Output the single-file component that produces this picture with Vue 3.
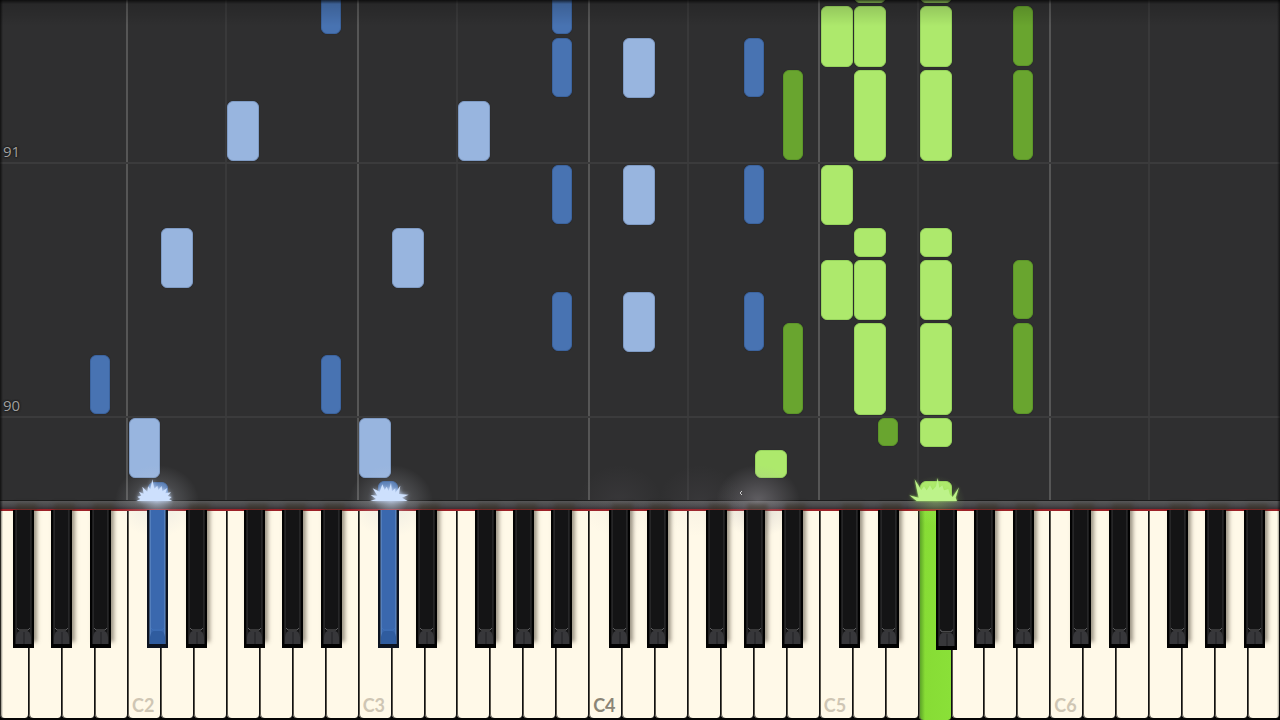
<script setup>
const VIEW = 1280
const ROLL = 500
const OCTAVE = 230.75
const WHITE = OCTAVE / 7
const C2 = 127.5

const whiteNames = ['C', 'D', 'E', 'F', 'G', 'A', 'B']
const offsets = { C: 0, D: 1, E: 2, F: 3, G: 4, A: 5, B: 6 }
const sharpOffsets = { 'C#': 20, 'D#': 58.5, 'F#': 117, 'G#': 155, 'A#': 193.5 }

const pct = (value, total) => `${(value / total) * 100}%`

function locate(pitch) {
  const name = pitch.slice(0, -1)
  const start = C2 + (Number(pitch.slice(-1)) - 2) * OCTAVE
  return name in sharpOffsets
    ? { left: start + sharpOffsets[name], width: 20, sharp: true }
    : { left: start + offsets[name] * WHITE + 1, width: WHITE - 1, sharp: false }
}

const score = [
  ['left', 'A#1', [[355, 414]]],
  ['left', 'C2', [[418, 478]]],
  ['left', 'C#2', [[482, 510]]],
  ['left', 'D2', [[228, 288]]],
  ['left', 'F2', [[101, 161]]],
  ['left', 'A#2', [[-20, 34], [355, 414]]],
  ['left', 'C3', [[418, 478]]],
  ['left', 'C#3', [[481, 510]]],
  ['left', 'D3', [[228, 288]]],
  ['left', 'F3', [[101, 161]]],
  ['left', 'A#3', [[-20, 34], [38, 97], [165, 224], [292, 351]]],
  ['left', 'D4', [[38, 98], [165, 225], [292, 352]]],
  ['left', 'G#4', [[38, 97], [165, 224], [292, 351]]],
  ['right', 'A4', [[450, 478]]],
  ['right', 'A#4', [[70, 160], [323, 414]]],
  ['right', 'C5', [[6, 67], [165, 225], [260, 320]]],
  ['right', 'D5', [[-20, 3], [6, 67], [70, 161], [228, 257], [260, 320], [323, 415]]],
  ['right', 'D#5', [[418, 446]]],
  ['right', 'F5', [[-20, 3], [6, 67], [70, 161], [228, 257], [260, 320], [323, 415], [418, 447], [481, 510]]],
  ['right', 'A#5', [[6, 66], [70, 160], [260, 319], [323, 414]]],
]

const notes = score.flatMap(([hand, pitch, spans]) => {
  const place = locate(pitch)
  return spans.map(([from, to]) => ({
    id: `${pitch}-${from}`,
    kind: [hand, { sharp: place.sharp }],
    style: {
      left: pct(place.left, VIEW),
      width: pct(place.width, VIEW),
      top: pct(from, ROLL),
      height: pct(to - from, ROLL),
    },
  }))
})

const measures = [
  { number: 91, style: { top: pct(162, ROLL) } },
  { number: 90, style: { top: pct(416, ROLL) } },
]

const guides = [2, 3, 4, 5, 6].flatMap((octave) => {
  const x = C2 + (octave - 2) * OCTAVE
  return [
    { id: `c${octave}`, strong: true, style: { left: pct(x - 1.3, VIEW) } },
    { id: `f${octave}`, strong: false, style: { left: pct(x + 3 * WHITE - 1.3, VIEW) } },
  ]
})

const whiteKeys = Array.from({ length: 39 }, (_, i) => {
  const step = i + 3
  const name = whiteNames[step % 7]
  const pitch = name + (1 + Math.floor(step / 7))
  const left = C2 + (i - 4) * WHITE
  const visible = Math.min(VIEW, left + WHITE) - Math.max(0, left)
  return {
    pitch,
    label: name === 'C' ? pitch : '',
    middle: pitch === 'C4',
    pressed: pitch === 'F5',
    style: { flexGrow: visible },
  }
})

const blackKeys = [1, 2, 3, 4, 5, 6]
  .flatMap((octave) => Object.keys(sharpOffsets).map((name) => name + octave))
  .filter((pitch) => locate(pitch).left > 0)
  .map((pitch) => ({
    pitch,
    pressed: pitch === 'C#2' || pitch === 'C#3',
    lowered: pitch === 'F#5',
    style: { left: pct(locate(pitch).left - 0.5, VIEW), width: pct(21, VIEW) },
  }))

const glows = [
  { id: 'g1', kind: 'bright', style: { left: pct(157, VIEW) } },
  { id: 'g2', kind: 'bright', style: { left: pct(391, VIEW) } },
  { id: 'g3', kind: 'wide', style: { left: pct(758, VIEW) } },
  { id: 'g4', kind: 'green', style: { left: pct(936, VIEW) } },
  { id: 'g5', kind: 'faint', style: { left: pct(620, VIEW) } },
  { id: 'g6', kind: 'faint', style: { left: pct(700, VIEW) } },
]

const sparks = [
  {
    id: 's1',
    kind: 'ice',
    style: { left: pct(125, VIEW) },
    points: '109,120 121,114 112,107 124,104 117,92 131,98 127,77 142,92 144,76 151,85 157,55 163,83 172,74 175,87 185,75 187,91 202,81 196,97 213,94 203,105 215,108 207,115 217,120',
  },
  {
    id: 's2',
    kind: 'ice',
    style: { left: pct(365, VIEW) },
    points: '90,120 108,114 92,102 112,104 98,82 119,92 127,70 134,87 140,77 146,90 153,65 156,91 166,82 166,95 181,74 177,99 206,101 186,110 203,120',
  },
  {
    id: 's3',
    kind: 'lime',
    style: { left: pct(905, VIEW) },
    points: '110,120 88,103 116,110 104,55 124,87 132,76 140,88 150,73 158,87 168,76 173,51 178,80 187,73 192,88 205,84 210,101 218,108 237,79 227,110 231,120',
  },
]
</script>

<template>
  <main class="stage">
    <section class="roll" aria-label="Falling notes">
      <div class="lanes">
        <i v-for="g in guides" :key="g.id" class="guide" :class="{ strong: g.strong }" :style="g.style"></i>
        <div v-for="m in measures" :key="m.number" class="measure" :style="m.style">
          <span>{{ m.number }}</span>
        </div>
        <i v-for="n in notes" :key="n.id" class="note" :class="n.kind" :style="n.style"></i>
      </div>
    </section>
    <div class="rail">
      <i v-for="g in glows" :key="g.id" class="glow" :class="g.kind" :style="g.style"></i>
      <svg v-for="s in sparks" :key="s.id" class="spark" :class="s.kind" :style="s.style" viewBox="75 51 165 69" aria-hidden="true">
        <polygon :points="s.points" />
      </svg>
      <svg class="mote" viewBox="0 0 4 6" aria-hidden="true"><path d="M3 1L1 3L3 5" /></svg>
    </div>
    <section class="keyboard" aria-label="Piano keyboard">
      <div class="whites">
        <button
          v-for="k in whiteKeys"
          :key="k.pitch"
          type="button"
          class="white"
          :class="{ pressed: k.pressed, middle: k.middle }"
          :style="k.style"
          :aria-label="k.pitch"
        >{{ k.label }}</button>
      </div>
      <button
        v-for="k in blackKeys"
        :key="k.pitch"
        type="button"
        class="black"
        :class="{ pressed: k.pressed, lowered: k.lowered }"
        :style="k.style"
        :aria-label="k.pitch"
      >
        <svg viewBox="0 0 21 138" preserveAspectRatio="none" aria-hidden="true">
          <path class="face" d="M3 0H18V134H3Z" />
          <path class="edge" d="M3 0V134M18 0V134" />
          <path class="tip" d="M3 134V127Q4 121 7 121H14Q17 121 18 127V134Z" />
          <path class="lip" d="M4 118L6 120H15L17 118" />
          <path class="seam" d="M11 122V134" />
        </svg>
      </button>
    </section>
  </main>
</template>

<style>
body {
  margin: 0;
  background: #2f2f30;
}
</style>

<style scoped>
.stage {
  position: relative;
  display: flex;
  flex-direction: column;
  min-height: 100vh;
  overflow: hidden;
  font-family: Lato, "Open Sans", sans-serif;
}
.stage::after {
  content: "";
  position: absolute;
  inset: 0;
  z-index: 5;
  pointer-events: none;
  background:
    linear-gradient(to right, rgba(0, 0, 0, 0.65), transparent 3px),
    linear-gradient(to left, rgba(0, 0, 0, 0.55), transparent 3px),
    linear-gradient(rgba(0, 0, 0, 0.7), rgba(0, 0, 0, 0.16) 4px, transparent 26px);
}
.roll {
  display: grid;
  flex: 1 0 400px;
  background: #2f2f30;
}
.lanes {
  position: relative;
  overflow: hidden;
}
.guide {
  position: absolute;
  top: 0;
  bottom: 0;
  width: 2px;
  background: #39393a;
}
.guide.strong {
  background: #565656;
}
.measure {
  position: absolute;
  left: 0;
  right: 0;
  height: 2px;
  background: #3b3b3c;
}
.measure span {
  position: absolute;
  left: 3px;
  bottom: 5px;
  font-family: "Open Sans", sans-serif;
  font-size: 15px;
  line-height: 16px;
  color: #a0a0a0;
  text-shadow: 0 0 2px #111, 0 0 2px #111;
}
.note {
  position: absolute;
  box-sizing: border-box;
  border: 1px solid #7f9bc4;
  border-radius: 6px;
  background: #98b5df;
  box-shadow: 0 0 1px #1e1e24;
}
.note.left.sharp {
  border-color: #3c649f;
  background: #4873b2;
}
.note.right {
  border-color: #98d45e;
  background: #ade96c;
}
.note.right.sharp {
  border-color: #5d962a;
  background: #69a52f;
}
.rail {
  position: relative;
  z-index: 2;
  height: 11px;
  box-sizing: border-box;
  border-top: 1px solid #1c1c1c;
  border-bottom: 2px solid #9c2228;
  background: linear-gradient(#5a5a5b, #48484a 60%, #3b3034);
}
.glow {
  position: absolute;
  bottom: -28px;
  width: 84px;
  height: 72px;
  margin-left: -42px;
  pointer-events: none;
}
.glow.bright {
  background: radial-gradient(closest-side, rgba(205, 220, 245, 0.6), rgba(200, 205, 215, 0.2) 40%, transparent);
}
.glow.wide {
  background: radial-gradient(closest-side, rgba(190, 185, 195, 0.35), rgba(170, 165, 175, 0.2) 50%, transparent);
}
.glow.green {
  background: radial-gradient(closest-side, rgba(172, 240, 105, 0.3), transparent 70%);
}
.glow.faint {
  background: radial-gradient(closest-side, rgba(160, 150, 165, 0.08), transparent);
}
.spark {
  position: absolute;
  bottom: 8px;
  width: 55px;
  height: 23px;
}
.spark.ice {
  fill: #cde0fd;
  filter: drop-shadow(0 0 2px #c5d9fa);
}
.spark.lime {
  fill: #bdf38a;
  filter: drop-shadow(0 0 1px #9de45c);
}
.mote {
  position: absolute;
  left: 57.7%;
  bottom: 13px;
  width: 4px;
  height: 6px;
  fill: none;
  stroke: #ccc;
}
.keyboard {
  position: relative;
  flex: none;
  height: 209px;
  background: #050505;
}
.whites {
  display: flex;
  height: 100%;
}
.white {
  display: flex;
  flex: 1 1 0;
  align-items: flex-end;
  min-width: 0;
  box-sizing: border-box;
  height: 207px;
  margin: 0;
  padding: 0 0 1px 4px;
  border: solid #111;
  border-width: 0 1px 0 0;
  border-radius: 0 0 4px 4px;
  background: #fff9e8;
  box-shadow: inset 1px 0 #5a564d;
  color: #cfc6b4;
  font: 700 18px/24px Lato, "Open Sans", sans-serif;
}
.white.middle {
  color: #8b8576;
}
.white.pressed {
  height: 209px;
  background: linear-gradient(to right, #559a25, #87dc35 6px, #8ae038);
}
.black {
  position: absolute;
  top: -1px;
  z-index: 3;
  height: 138px;
  margin: 0;
  padding: 0;
  border: 0;
  background: #020202;
  box-shadow: 3px -6px 4px rgba(60, 50, 35, 0.5);
}
.black.lowered {
  height: 140px;
  box-shadow: none;
}
.black svg {
  display: block;
  width: 100%;
  height: 100%;
}
.face {
  fill: #141415;
}
.edge {
  fill: none;
  stroke: #38383a;
}
.tip {
  fill: #37373a;
}
.lip {
  fill: none;
  stroke: #5c5c5e;
}
.seam {
  stroke: #202022;
}
.black.pressed {
  background: #0c1320;
  box-shadow: none;
}
.pressed .face {
  fill: #3a68ae;
}
.pressed .edge {
  stroke: #6d94c9;
}
.pressed .tip {
  fill: #2f5c9f;
}
.pressed .lip {
  stroke: #3e70b8;
}
.pressed .seam {
  stroke: none;
}
</style>
